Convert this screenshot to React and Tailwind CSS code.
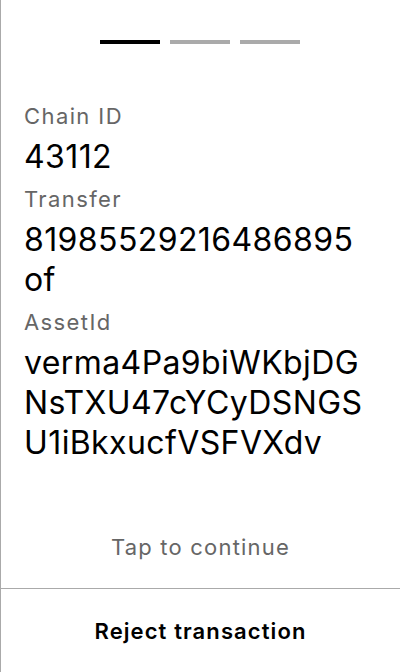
export default function App() {
  const font = { fontFamily: "Inter, 'Noto Sans', sans-serif" };
  return (
    <div style={font} className="w-[400px] h-[672px] bg-white border-l border-[#aaaaaa] flex flex-col">
      <div className="flex justify-center gap-[10px] pt-[40px] pr-[1px]">
        <div className="w-[60px] h-[4px] bg-black" />
        <div className="w-[60px] h-[4px] bg-[#aaaaaa]" />
        <div className="w-[60px] h-[4px] bg-[#aaaaaa]" />
      </div>
      <div className="pl-[23px] pr-[30px] pt-[58px] flex flex-col">
        <div className="text-[22px] leading-[28px] tracking-[1.4px] text-[#666666]">Chain ID</div>
        <div className="mt-[7px] text-[32px] leading-[40px] tracking-[0.4px] text-black">43112</div>
        <div className="mt-[8px] text-[22px] leading-[28px] tracking-[1.4px] text-[#666666]">Transfer</div>
        <div className="mt-[7px] text-[32px] leading-[40px] tracking-[0.4px] text-black">81985529216486895 of</div>
        <div className="mt-[8px] text-[22px] leading-[28px] tracking-[1.4px] text-[#666666]">AssetId</div>
        <div className="mt-[7px] text-[32px] leading-[40px] tracking-[0.4px] text-black break-all">verma4Pa9biWKbjDGNsTXU47cYCyDSNGSU1iBkxucfVSFVXdv</div>
      </div>
      <div className="flex-1" />
      <div className="text-center text-[22px] leading-[28px] tracking-[1.2px] text-[#666666] pb-[27px]">Tap to continue</div>
      <div className="border-t border-[#aaaaaa] h-[84px] flex items-center justify-center">
        <span className="text-[22px] leading-[28px] tracking-[1.1px] font-semibold text-black">Reject transaction</span>
      </div>
    </div>
  );
}
